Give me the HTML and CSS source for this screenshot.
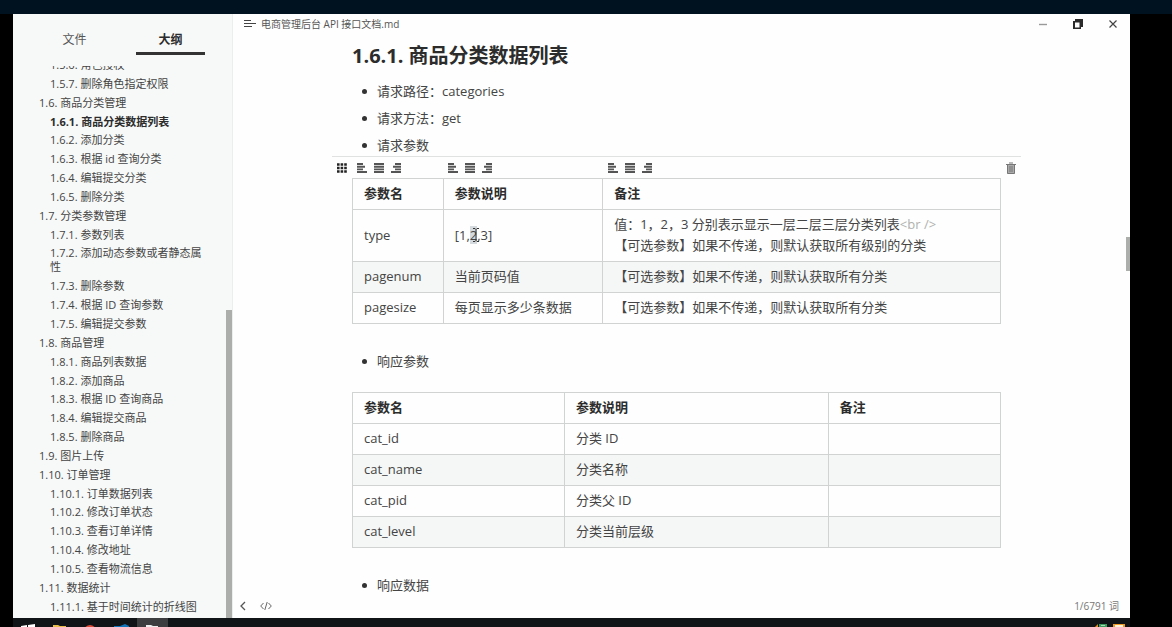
FILE: index.html
```html
<!DOCTYPE html>
<html lang="zh-CN">
<head>
<meta charset="utf-8">
<title>电商管理后台 API 接口文档.md</title>
<link rel="stylesheet" href="styles.css">
</head>
<body>
<svg class="defs" aria-hidden="true">
  <symbol id="left" viewBox="0 0 10 10"><path d="M0 1h6M0 3.700h8M0 6.400h6M0 9h10" stroke="currentColor" stroke-width="1.900"/></symbol>
  <symbol id="center" viewBox="0 0 10 10"><path d="M0 1h10M0 3.700h10M0 6.400h10M0 9h10" stroke="currentColor" stroke-width="1.900"/></symbol>
  <symbol id="right" viewBox="0 0 10 10"><path d="M4 1h6M2 3.700h8M4 6.400h6M0 9h10" stroke="currentColor" stroke-width="1.900"/></symbol>
</svg>
<div class="screen">
  <div class="window">
    <aside class="sidebar">
      <div class="tabs">
        <button class="tab">文件</button>
        <button class="tab active">大纲</button>
      </div>
      <nav class="outline">
        <ul class="outline-list">
          <li class="l3"><a href="#">1.5.6. 角色授权</a></li>
          <li class="l3"><a href="#">1.5.7. 删除角色指定权限</a></li>
          <li><a href="#">1.6. 商品分类管理</a></li>
          <li class="l3 current"><a href="#">1.6.1. 商品分类数据列表</a></li>
          <li class="l3"><a href="#">1.6.2. 添加分类</a></li>
          <li class="l3"><a href="#">1.6.3. 根据 id 查询分类</a></li>
          <li class="l3"><a href="#">1.6.4. 编辑提交分类</a></li>
          <li class="l3"><a href="#">1.6.5. 删除分类</a></li>
          <li><a href="#">1.7. 分类参数管理</a></li>
          <li class="l3"><a href="#">1.7.1. 参数列表</a></li>
          <li class="l3"><a href="#">1.7.2. 添加动态参数或者静态属性</a></li>
          <li class="l3"><a href="#">1.7.3. 删除参数</a></li>
          <li class="l3"><a href="#">1.7.4. 根据 ID 查询参数</a></li>
          <li class="l3"><a href="#">1.7.5. 编辑提交参数</a></li>
          <li><a href="#">1.8. 商品管理</a></li>
          <li class="l3"><a href="#">1.8.1. 商品列表数据</a></li>
          <li class="l3"><a href="#">1.8.2. 添加商品</a></li>
          <li class="l3"><a href="#">1.8.3. 根据 ID 查询商品</a></li>
          <li class="l3"><a href="#">1.8.4. 编辑提交商品</a></li>
          <li class="l3"><a href="#">1.8.5. 删除商品</a></li>
          <li><a href="#">1.9. 图片上传</a></li>
          <li><a href="#">1.10. 订单管理</a></li>
          <li class="l3"><a href="#">1.10.1. 订单数据列表</a></li>
          <li class="l3"><a href="#">1.10.2. 修改订单状态</a></li>
          <li class="l3"><a href="#">1.10.3. 查看订单详情</a></li>
          <li class="l3"><a href="#">1.10.4. 修改地址</a></li>
          <li class="l3"><a href="#">1.10.5. 查看物流信息</a></li>
          <li><a href="#">1.11. 数据统计</a></li>
          <li class="l3"><a href="#">1.11.1. 基于时间统计的折线图</a></li>
        </ul>
      </nav>
      <div class="side-thumb"></div>
    </aside>

    <main class="main">
      <header class="titlebar">
        <button class="icon-btn" aria-label="菜单"><svg width="12" height="8" viewBox="0 0 12 8"><path d="M0 .5h7M0 3.500h12M0 6.500h8" stroke="#444" stroke-width="1"/></svg></button>
        <span class="title">电商管理后台 API 接口文档.md</span>
        <div class="controls">
          <button class="icon-btn" aria-label="最小化"><svg width="10" height="10" viewBox="0 0 10 10"><path d="M1 5.500h8" stroke="#999" stroke-width="1.400"/></svg></button>
          <button class="icon-btn" aria-label="还原"><svg width="10" height="10" viewBox="0 0 10 10"><path d="M2 0h8v8H8v2H0V2h2zM2 3.500v5h4.500v-5z" fill="#2a2a2a" fill-rule="evenodd"/></svg></button>
          <button class="icon-btn" aria-label="关闭"><svg width="10" height="10" viewBox="0 0 10 10"><path d="M1.500 1.500l7 7M8.500 1.500l-7 7" stroke="#444" stroke-width="1.200"/></svg></button>
        </div>
      </header>

      <article class="doc">
        <h3>1.6.1. 商品分类数据列表</h3>
        <ul class="bullets">
          <li>请求路径：categories</li>
          <li>请求方法：get</li>
          <li>请求参数</li>
        </ul>
        <div class="table-tools">
          <button class="icon-btn tool-side" aria-label="调整表格"><svg width="10" height="10" viewBox="0 0 10 10"><path d="M0 1.500h10M0 5h10M0 8.500h10" stroke="#222" stroke-width="2.400" stroke-dasharray="2.600 1"/></svg></button>
          <div class="tool-cols">
            <div class="aligns">
              <button class="icon-btn" aria-label="左对齐"><svg width="10" height="10"><use href="#left"/></svg></button>
              <button class="icon-btn" aria-label="居中"><svg width="10" height="10"><use href="#center"/></svg></button>
              <button class="icon-btn" aria-label="右对齐"><svg width="10" height="10"><use href="#right"/></svg></button>
            </div>
            <div class="aligns">
              <button class="icon-btn" aria-label="左对齐"><svg width="10" height="10"><use href="#left"/></svg></button>
              <button class="icon-btn" aria-label="居中"><svg width="10" height="10"><use href="#center"/></svg></button>
              <button class="icon-btn" aria-label="右对齐"><svg width="10" height="10"><use href="#right"/></svg></button>
            </div>
            <div class="aligns">
              <button class="icon-btn" aria-label="左对齐"><svg width="10" height="10"><use href="#left"/></svg></button>
              <button class="icon-btn" aria-label="居中"><svg width="10" height="10"><use href="#center"/></svg></button>
              <button class="icon-btn" aria-label="右对齐"><svg width="10" height="10"><use href="#right"/></svg></button>
            </div>
          </div>
          <button class="icon-btn tool-side" aria-label="删除表格"><svg width="10" height="12" viewBox="0 0 10 12"><path d="M1 3h8v8.500H1z" fill="#aaa"/><path d="M0 2.500h10M3 1h4M1.500 3v8.500h7V3M4 4v6M6 4v6" fill="none" stroke="#777"/></svg></button>
        </div>
        <table>
          <colgroup><col class="a1"><col class="a2"><col></colgroup>
          <thead><tr><th>参数名</th><th>参数说明</th><th>备注</th></tr></thead>
          <tbody>
            <tr><td>type</td><td>[1,<span class="selected">2<svg class="caret" width="6" height="14" viewBox="0 0 6 14"><path d="M0 .5h2l1 1 1-1h2M3 1.500v11M0 13.500h2l1-1 1 1h2" fill="none" stroke="#333"/></svg></span>,3]</td><td>值：1，2，3 分别表示显示一层二层三层分类列表<span class="tag">&lt;br /&gt;</span><br>【可选参数】如果不传递，则默认获取所有级别的分类</td></tr>
            <tr><td>pagenum</td><td>当前页码值</td><td>【可选参数】如果不传递，则默认获取所有分类</td></tr>
            <tr><td>pagesize</td><td>每页显示多少条数据</td><td>【可选参数】如果不传递，则默认获取所有分类</td></tr>
          </tbody>
        </table>
        <ul class="bullets spaced">
          <li>响应参数</li>
        </ul>
        <table>
          <colgroup><col class="b1"><col class="b2"><col></colgroup>
          <thead><tr><th>参数名</th><th>参数说明</th><th>备注</th></tr></thead>
          <tbody>
            <tr><td>cat_id</td><td>分类 ID</td><td></td></tr>
            <tr><td>cat_name</td><td>分类名称</td><td></td></tr>
            <tr><td>cat_pid</td><td>分类父 ID</td><td></td></tr>
            <tr><td>cat_level</td><td>分类当前层级</td><td></td></tr>
          </tbody>
        </table>
        <ul class="bullets spaced">
          <li>响应数据</li>
        </ul>
      </article>

      <footer class="status">
        <button class="icon-btn" aria-label="收起侧栏"><svg width="6" height="10" viewBox="0 0 6 10"><path d="M5 1L1 5l4 4" fill="none" stroke="#555" stroke-width="1.300"/></svg></button>
        <button class="icon-btn" aria-label="源代码模式"><svg width="12" height="8" viewBox="0 0 12 8"><path d="M3.500 1L.7 4l2.800 3M8.500 1l2.800 3-2.800 3M7.200 0L4.800 8" fill="none" stroke="#666"/></svg></button>
        <span class="count">1/6791 词</span>
      </footer>
      <div class="main-thumb"></div>
    </main>
  </div>

  <div class="taskbar">
    <div class="task"><svg width="30" height="9" viewBox="0 0 30 9"><path d="M8 8l6-1v2H8zM15 7l7-1v3h-7z" fill="#fff"/></svg></div>
    <div class="task"><svg width="30" height="9" viewBox="0 0 30 9"><path d="M9 7h5l2 1h6v1H9z" fill="#e8bd4a"/></svg></div>
    <div class="task"><svg width="30" height="9" viewBox="0 0 30 9"><circle cx="15" cy="13" r="6" fill="#dc4a38"/></svg></div>
    <div class="task"><svg width="30" height="9" viewBox="0 0 30 9"><path d="M8 8l3 0 3 0 5-2 4 2v1H8z" fill="#1173b8"/></svg></div>
    <div class="task open"><svg width="30" height="9" viewBox="0 0 30 9"><path d="M9 7h5l2 1h5v1H9z" fill="#eee"/></svg></div>
    <div class="tray"><svg width="36" height="9" viewBox="0 0 36 9"><path d="M1 9l3-3v3z" fill="#e98a20"/><path d="M5 6h8v3H5z" fill="#3d9b5b"/><path d="M7 7h4v1H7z" fill="#a5d8b4"/><path d="M19 6h12v3H19z" fill="#f09a28"/><path d="M21 7h8v2h-8z" fill="#fff3da"/></svg></div>
  </div>
</div>
</body>
</html>
```

FILE: styles.css
```css
* { box-sizing: border-box; }

body {
  margin: 0;
  background: #000;
  color: #444;
  font-family: "Open Sans", "Noto Sans CJK SC", sans-serif;
  font-size: 13px;
  line-height: 21px;
}

ul { list-style: none; margin: 0; padding: 0; }
a { color: inherit; text-decoration: none; }

button {
  border: 0;
  padding: 0;
  background: none;
  color: inherit;
  font: inherit;
}

.defs { position: absolute; width: 0; height: 0; }

.icon-btn { display: flex; align-items: center; justify-content: center; }

.screen {
  display: flex;
  flex-direction: column;
  height: 100vh;
  padding: 0 42px 0 13px;
  border-top: 14px solid #00121f;
}

.window { display: flex; flex: 1; min-height: 0; background: #fdfefd; }

/* Sidebar */
.sidebar {
  position: relative;
  display: flex;
  flex-direction: column;
  flex: none;
  width: 220px;
  background: #f7f9f8;
  border-right: 1px solid #eceeed;
}

.tabs { display: flex; justify-content: space-between; padding: 11px 27px 0; }

.tab {
  width: 69px;
  height: 30px;
  padding-top: 2px;
  border-bottom: 3px solid transparent;
  color: #555;
  font-size: 12px;
}

.tab.active { border-color: #333; color: #2c2c2c; font-weight: 700; }

.outline {
  display: flex;
  flex: 1;
  min-height: 0;
  margin-top: 11px;
  overflow: hidden;
  font-size: 11px;
  line-height: 14px;
}

.outline-list {
  display: flex;
  flex-direction: column;
  justify-content: space-between;
  margin-top: -8px;
  padding: 0 26px 4px;
}

.l3 { padding-left: 11px; }
.current { color: #2c2c2c; font-weight: 700; }

.side-thumb {
  position: absolute;
  top: 49%;
  right: 0;
  bottom: 0;
  width: 6px;
  background: #acaeac;
}

/* Editor */
.main {
  position: relative;
  display: flex;
  flex: 1;
  flex-direction: column;
  min-width: 0;
}

.titlebar {
  display: flex;
  align-items: center;
  gap: 5px;
  height: 20px;
  padding: 0 12px 0 11px;
  font-size: 10px;
  color: #555;
}

.controls { display: flex; gap: 25px; margin-left: auto; }

.doc { flex: 1; min-height: 0; overflow: hidden; padding: 9px 129px 0 119px; }

h3 { margin: 0 0 12px; color: #2c2c2c; font-size: 20px; line-height: 26px; }

.bullets { display: flex; flex-direction: column; gap: 6px; }
.bullets.spaced { margin: 27px 0 20px; }
.bullets li { display: flex; align-items: center; gap: 10px; padding-left: 10px; }

.bullets li::before {
  content: "";
  width: 5px;
  height: 5px;
  border-radius: 50%;
  background: #333;
}

.table-tools {
  display: flex;
  align-items: center;
  height: 22px;
  margin: 0 -20px;
  border-top: 1px solid #dfe2e0;
  color: #555;
}

.tool-side { width: 20px; }
.tool-cols { display: grid; flex: 1; grid-template-columns: 14% 24.6% 1fr; }
.aligns { display: flex; gap: 7px; padding-left: 5px; }

table { width: 100%; border-collapse: collapse; table-layout: fixed; }

th, td {
  height: 31px;
  padding: 4px 11px 5px;
  border: 1px solid #d0d3d1;
  text-align: left;
}

th { color: #2c2c2c; }

tbody tr:nth-child(even) { background: #f5f7f6; }

.a1 { width: 14%; }
.a2 { width: 24.6%; }
.b1 { width: 32.7%; }
.b2 { width: 40.7%; }

.selected { position: relative; background: #d5dade; }
.caret { position: absolute; top: 2px; right: -2px; }
.tag { color: #b0b2b0; }

.status {
  display: flex;
  align-items: center;
  gap: 14px;
  height: 24px;
  padding: 0 11px 0 7px;
  font-size: 10px;
  color: #777;
}

.count { margin-left: auto; }

.main-thumb {
  position: absolute;
  top: 37%;
  right: 0;
  width: 4px;
  height: 34px;
  background: #acaeac;
}

/* Taskbar */
.taskbar { display: flex; flex: none; height: 9px; overflow: hidden; background: #111416; }
.task { display: flex; width: 31px; }
.task.open { background: #3b3d3e; }
.tray { display: flex; margin-left: auto; }
```
